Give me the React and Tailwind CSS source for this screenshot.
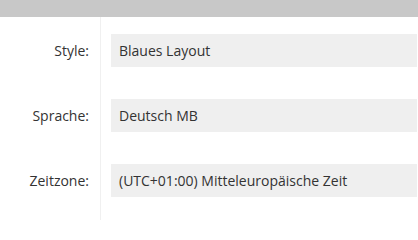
import React from "react";

const fields = [
  { label: "Style:", value: "Blaues Layout" },
  { label: "Sprache:", value: "Deutsch MB" },
  { label: "Zeitzone:", value: "(UTC+01:00) Mitteleuropäische Zeit" },
];

const App = () => {
  return (
    <div
      className="w-[418px] h-[220px] bg-white text-[#333] overflow-hidden flex flex-col"
      style={{ fontFamily: '"Open Sans", "Noto Sans", sans-serif' }}
    >
      <div className="h-[17px] bg-[#c8c8c8] shrink-0" />
      <div className="flex flex-1">
        <div className="w-[101px] border-r border-[#f0f0f0] pt-[17px] pr-[11px] flex flex-col gap-[32px]">
          {fields.map((cur) => (
            <div key={cur.label} className="h-[33px] flex items-center justify-end text-[14px]">
              {cur.label}
            </div>
          ))}
        </div>
        <div className="flex-1 pt-[17px] pl-[10px] pr-[1px] flex flex-col gap-[32px]">
          {fields.map((cur) => (
            <div
              key={cur.label}
              className="h-[33px] bg-[#efefef] flex items-center pl-[8px] text-[14px] whitespace-nowrap"
            >
              {cur.value}
            </div>
          ))}
        </div>
      </div>
    </div>
  );
};

export default App;
